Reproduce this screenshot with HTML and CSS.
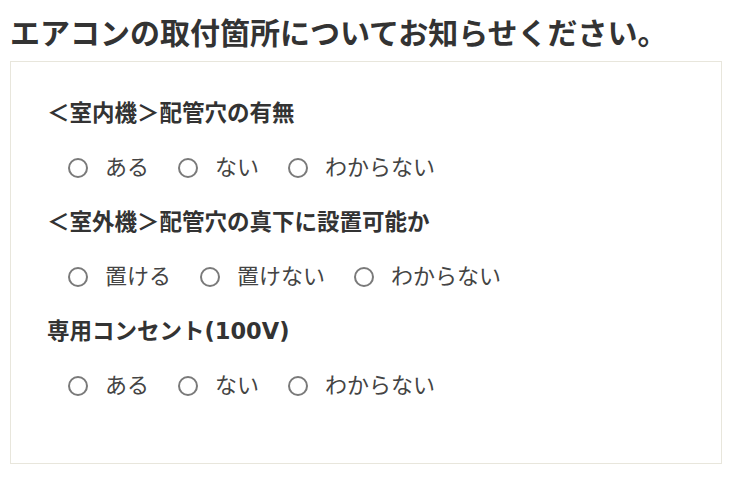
FILE: index.html
```html
<!DOCTYPE html>
<html lang="ja">
<head>
<meta charset="utf-8">
<link rel="stylesheet" href="styles.css">
</head>
<body>
<div class="page">
  <h1 class="title">エアコンの取付箇所についてお知らせください。</h1>
  <div class="box">
    <div class="q">
      <p class="q-label">＜室内機＞配管穴の有無</p>
      <div class="opts">
        <label class="opt"><input type="radio" name="a"><span>ある</span></label>
        <label class="opt"><input type="radio" name="a"><span>ない</span></label>
        <label class="opt"><input type="radio" name="a"><span>わからない</span></label>
      </div>
    </div>
    <div class="q">
      <p class="q-label">＜室外機＞配管穴の真下に設置可能か</p>
      <div class="opts">
        <label class="opt"><input type="radio" name="b"><span>置ける</span></label>
        <label class="opt"><input type="radio" name="b"><span>置けない</span></label>
        <label class="opt"><input type="radio" name="b"><span>わからない</span></label>
      </div>
    </div>
    <div class="q">
      <p class="q-label">専用コンセント(100V)</p>
      <div class="opts">
        <label class="opt"><input type="radio" name="c"><span>ある</span></label>
        <label class="opt"><input type="radio" name="c"><span>ない</span></label>
        <label class="opt"><input type="radio" name="c"><span>わからない</span></label>
      </div>
    </div>
  </div>
</div>
</body>
</html>
```

FILE: styles.css
```css
html, body {
  margin: 0;
  padding: 0;
  background: #fff;
}
body {
  font-family: "DejaVu Sans", "Noto Sans CJK JP", sans-serif;
  color: #333;
}
.page {
  padding: 15px 10px 0 10px;
}
.title {
  margin: 0 0 8px 0;
  font-size: 30px;
  line-height: 38px;
  font-weight: 700;
  color: #333;
}
.box {
  border: 1px solid #e8e6dc;
  padding: 36px 20px 62px 36px;
}
.q + .q {
  margin-top: 24px;
}
.q-label {
  margin: 0 0 25px 0;
  font-size: 22.5px;
  line-height: 30px;
  font-weight: 700;
  color: #333;
}
.opts {
  display: flex;
  padding-left: 21px;
  height: 30px;
  align-items: center;
}
.opt {
  display: flex;
  align-items: center;
  margin-right: 29px;
  font-size: 22px;
  line-height: 30px;
  color: #444;
}
.opt input {
  appearance: none;
  -webkit-appearance: none;
  width: 20px;
  height: 20px;
  margin: 0 17px 0 0;
  border: 2px solid #7a7a7a;
  border-radius: 50%;
  background: #fff;
  box-sizing: border-box;
}
```
